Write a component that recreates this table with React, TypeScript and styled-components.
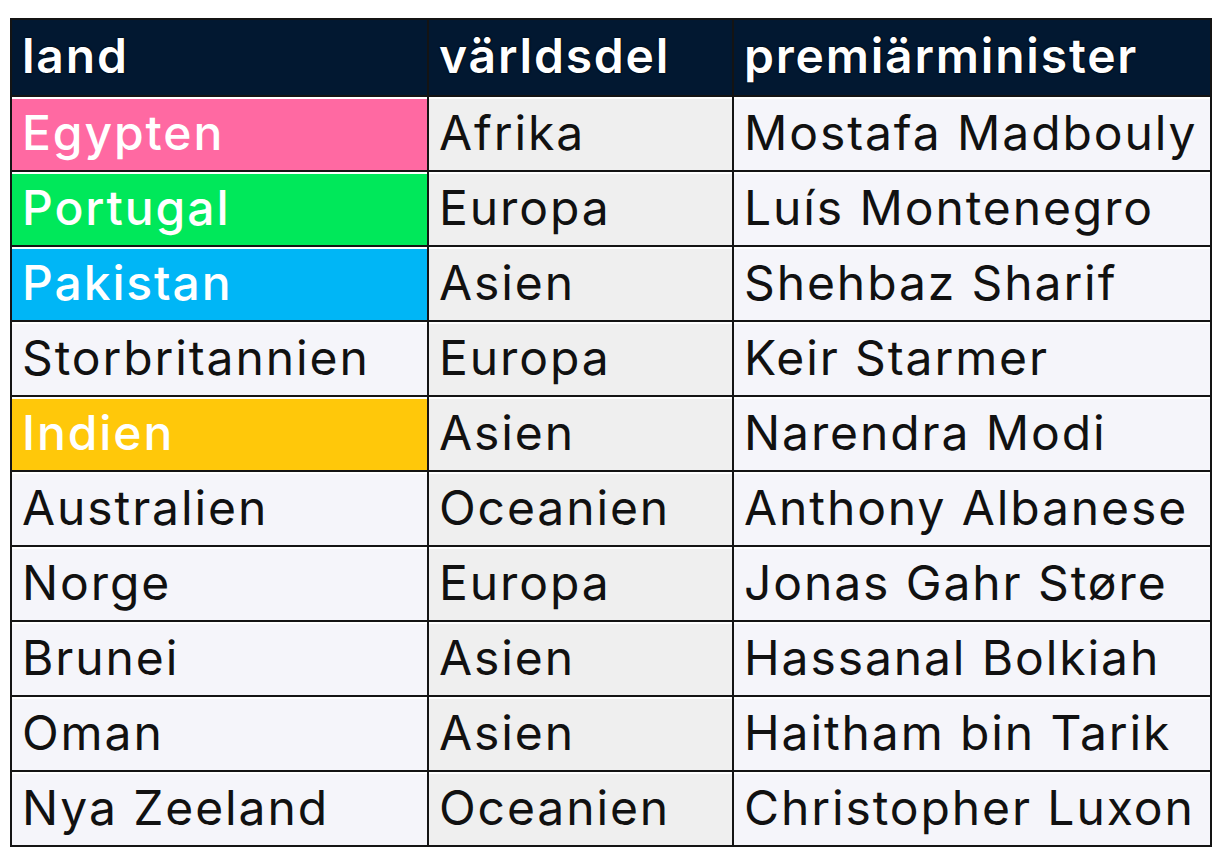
import styled, { createGlobalStyle } from "styled-components";

const Global = createGlobalStyle`
  html, body {
    margin: 0;
    background: #ffffff;
  }
`;

const Page = styled.div`
  padding: 18px 16px 0 10px;
`;

const Table = styled.table`
  width: 1200px;
  border-collapse: collapse;
  table-layout: fixed;
  font-family: Inter, "Liberation Sans", sans-serif;
  font-size: 48px;
  color: #111111;
  border: 2px solid #141414;
`;

const HeadCell = styled.th<{ $w: number }>`
  width: ${({ $w }) => $w}px;
  height: 77px;
  box-sizing: border-box;
  padding: 0 10px 4px;
  text-align: left;
  font-weight: 600;
  color: #ffffff;
  background: #021831;
  border: 2px solid #141414;
  text-shadow: 0 0 2px #000000, 0 0 1px #000000;
  letter-spacing: 1.8px;
`;

type Tone = "plain" | "pink" | "green" | "blue" | "yellow";

const toneBg: Record<Tone, string> = {
  plain: "#f5f5fa",
  pink: "#ff69a2",
  green: "#00e85a",
  blue: "#00b6f6",
  yellow: "#ffc80a",
};

const Cell = styled.td<{ $tone?: Tone; $grey?: boolean }>`
  height: 75px;
  box-sizing: border-box;
  padding: 0 10px 2px;
  white-space: nowrap;
  overflow: hidden;
  font-weight: ${({ $tone }) => ($tone && $tone !== "plain" ? 500 : 400)};
  color: ${({ $tone }) => ($tone && $tone !== "plain" ? "#ffffff" : "#111111")};
  background: ${({ $tone, $grey }) => ($grey ? "#efefef" : toneBg[$tone ?? "plain"])};
  border: 2px solid #141414;
  box-shadow: inset 0 2px 0 #ffffff;
  letter-spacing: 1.9px;
`;

const rows: { land: string; del: string; pm: string; tone: Tone }[] = [
  { land: "Egypten", del: "Afrika", pm: "Mostafa Madbouly", tone: "pink" },
  { land: "Portugal", del: "Europa", pm: "Luís Montenegro", tone: "green" },
  { land: "Pakistan", del: "Asien", pm: "Shehbaz Sharif", tone: "blue" },
  { land: "Storbritannien", del: "Europa", pm: "Keir Starmer", tone: "plain" },
  { land: "Indien", del: "Asien", pm: "Narendra Modi", tone: "yellow" },
  { land: "Australien", del: "Oceanien", pm: "Anthony Albanese", tone: "plain" },
  { land: "Norge", del: "Europa", pm: "Jonas Gahr Støre", tone: "plain" },
  { land: "Brunei", del: "Asien", pm: "Hassanal Bolkiah", tone: "plain" },
  { land: "Oman", del: "Asien", pm: "Haitham bin Tarik", tone: "plain" },
  { land: "Nya Zeeland", del: "Oceanien", pm: "Christopher Luxon", tone: "plain" },
];

export default function App() {
  return (
    <>
      <Global />
      <Page>
        <Table>
          <thead>
            <tr>
              <HeadCell $w={417}>land</HeadCell>
              <HeadCell $w={305}>världsdel</HeadCell>
              <HeadCell $w={478}>premiärminister</HeadCell>
            </tr>
          </thead>
          <tbody>
            {rows.map((r) => (
              <tr key={r.land}>
                <Cell $tone={r.tone}>{r.land}</Cell>
                <Cell $grey>{r.del}</Cell>
                <Cell>{r.pm}</Cell>
              </tr>
            ))}
          </tbody>
        </Table>
      </Page>
    </>
  );
}
